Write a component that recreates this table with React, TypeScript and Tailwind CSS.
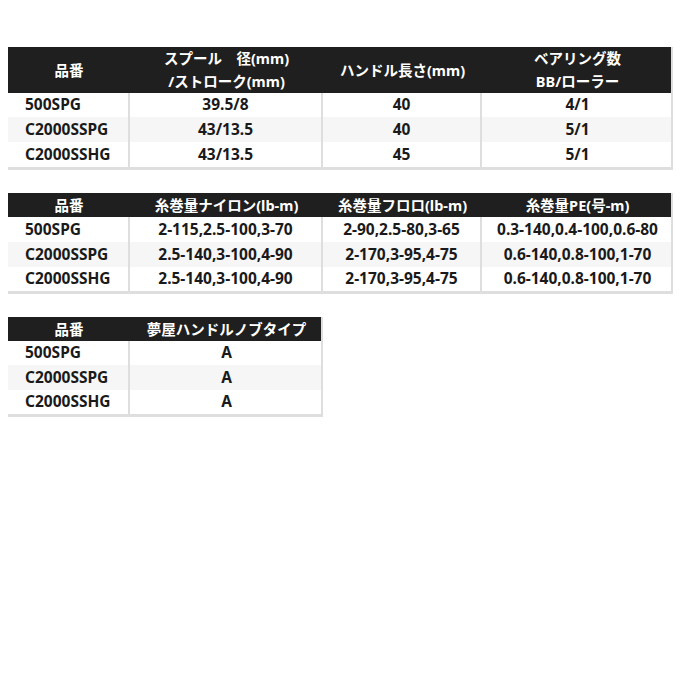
import React from "react";

const font = {
  fontFamily: '"Noto Sans", "Noto Sans CJK JP", sans-serif',
};

type Table = {
  cols: number[];
  head: React.ReactNode[];
  headH: string;
  rows: string[][];
  rowH: string[];
  width: string;
};

const tables: Table[] = [
  {
    cols: [122, 193, 159, 191],
    width: "w-[665px]",
    headH: "h-[46px]",
    head: [
      "品番",
      <>
        スプール　径(mm)
        <br />
        /ストローク(mm)
      </>,
      "ハンドル長さ(mm)",
      <>
        ベアリング数
        <br />
        BB/ローラー
      </>,
    ],
    rows: [
      ["500SPG", "39.5/8", "40", "4/1"],
      ["C2000SSPG", "43/13.5", "40", "5/1"],
      ["C2000SSHG", "43/13.5", "45", "5/1"],
    ],
    rowH: ["h-[24px]", "h-[25px]", "h-[25px]"],
  },
  {
    cols: [122, 193, 159, 191],
    width: "w-[665px]",
    headH: "h-[24px]",
    head: ["品番", "糸巻量ナイロン(lb-m)", "糸巻量フロロ(lb-m)", "糸巻量PE(号-m)"],
    rows: [
      ["500SPG", "2-115,2.5-100,3-70", "2-90,2.5-80,3-65", "0.3-140,0.4-100,0.6-80"],
      ["C2000SSPG", "2.5-140,3-100,4-90", "2-170,3-95,4-75", "0.6-140,0.8-100,1-70"],
      ["C2000SSHG", "2.5-140,3-100,4-90", "2-170,3-95,4-75", "0.6-140,0.8-100,1-70"],
    ],
    rowH: ["h-[25px]", "h-[25px]", "h-[24px]"],
  },
  {
    cols: [122, 193],
    width: "w-[315px]",
    headH: "h-[24px]",
    head: ["品番", "夢屋ハンドルノブタイプ"],
    rows: [
      ["500SPG", "A"],
      ["C2000SSPG", "A"],
      ["C2000SSHG", "A"],
    ],
    rowH: ["h-[24px]", "h-[25px]", "h-[24px]"],
  },
];

function SpecTable({ t }: { t: Table }) {
  return (
    <div className={`${t.width} border-r-2 border-b-[3px] border-[#dedede] bg-white`}>
      <div className={`flex ${t.headH} bg-[#1f1f1f] text-white`}>
        {t.head.map((h, i) => (
          <div
            key={i}
            style={{ width: t.cols[i] }}
            className="flex shrink-0 items-center justify-center text-center text-[14.5px] font-bold leading-[23px]"
          >
            <span>{h}</span>
          </div>
        ))}
      </div>
      {t.rows.map((r, ri) => (
        <div
          key={ri}
          className={`flex ${t.rowH[ri]} ${ri === 1 ? "bg-[#f6f6f6]" : "bg-white"}`}
        >
          {r.map((c, ci) => (
            <div
              key={ci}
              style={{ width: t.cols[ci] }}
              className={`flex shrink-0 items-center text-[15.5px] font-bold text-[#1a1a1a] ${
                ci === 0 ? "pl-[17px]" : "justify-center"
              } ${ci < r.length - 1 ? "border-r-2 border-[#dedede]" : ""}`}
            >
              {c}
            </div>
          ))}
        </div>
      ))}
    </div>
  );
}

export default function App() {
  return (
    <div style={font} className="h-[680px] w-[680px] bg-white pl-2 pt-[47px]">
      <div className="flex flex-col gap-[23px]">
        {tables.map((t, i) => (
          <SpecTable key={i} t={t} />
        ))}
      </div>
    </div>
  );
}
